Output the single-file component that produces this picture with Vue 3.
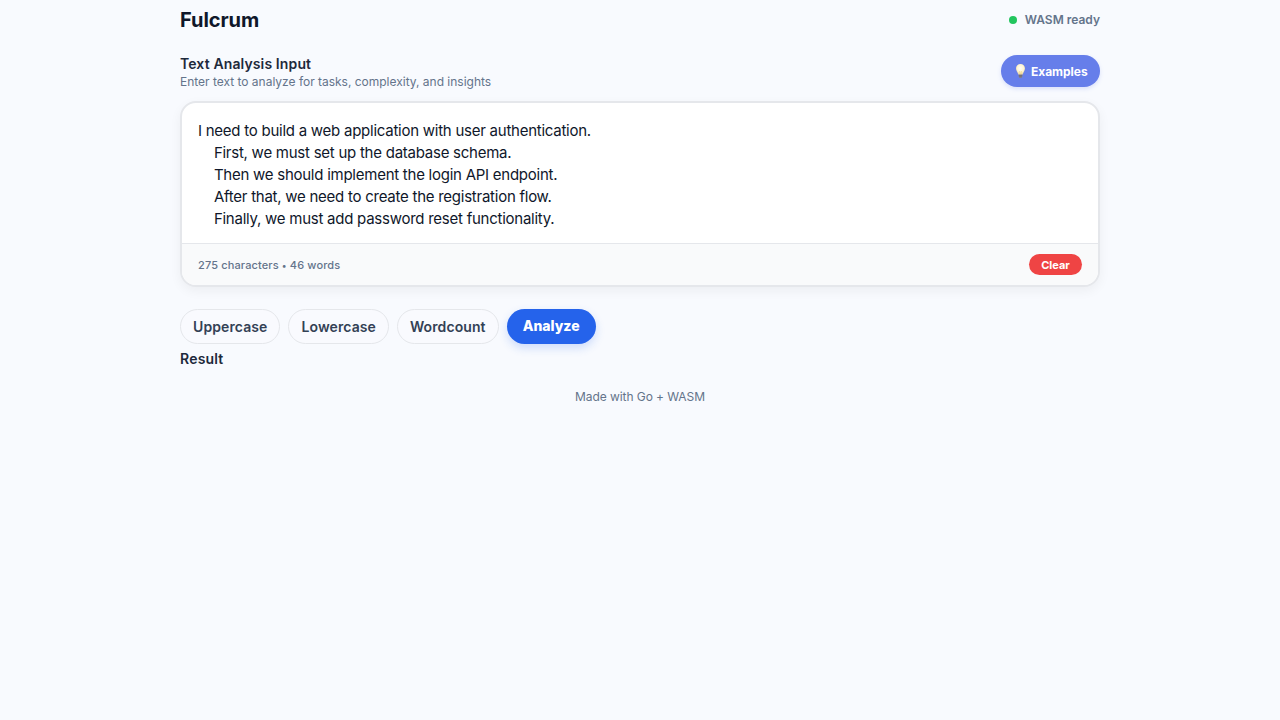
<script setup>
import { ref, computed } from 'vue'
const lines = ['I need to build a web application with user authentication.', '    First, we must set up the database schema.', '    Then we should implement the login API endpoint.', '    After that, we need to create the registration flow.', '    Finally, we must add password reset functionality.']
const text = ref(lines.join('\n'))
const summary = computed(() => '275 characters')
</script>

<template>
  <main class="page">
    <header class="top">
      <h1>Fulcrum</h1>
      <div class="status"><span class="dot"></span><span class="ready">WASM ready</span></div>
    </header>
    <section class="head">
      <div>
        <h2>Text Analysis Input</h2>
        <p>Enter text to analyze for tasks, complexity, and insights</p>
      </div>
      <button class="examples">
        <svg class="bulb" viewBox="0 0 14 14">
          <defs>
            <radialGradient id="glass" cx=".5" cy=".4" r=".65">
              <stop offset="0" stop-color="#fffef8" />
              <stop offset=".55" stop-color="#fdf4d3" />
              <stop offset="1" stop-color="#dfc994" />
            </radialGradient>
          </defs>
          <path d="M7.500 0C4.900 0 3 1.900 3 4.400c0 2.300 1.800 3.900 2.500 6.300h4C10.200 8.300 12 6.700 12 4.400 12 1.900 10.100 0 7.500 0z" fill="url(#glass)" />
          <path d="M6.600 7l.5 3.600h.8L8.400 7" fill="none" stroke="#f2d279" stroke-width=".7" />
          <path d="M5.700 10.600h3.600v2.200L8.400 14H6.600l-.9-1.200z" fill="#8b8890" />
          <path d="M5.800 11.600h3.400M6.100 12.800h2.800" stroke="#55545f" stroke-width=".5" />
        </svg>
        Examples
      </button>
    </section>
    <section class="editor">
      <div class="text">{{ text }}</div>
      <div class="foot"><span>{{ summary }} <span class="bullet">•</span> 46 words</span><button class="clear">Clear</button></div>
    </section>
    <div class="actions">
      <button>Uppercase</button><button>Lowercase</button><button>Wordcount</button><button class="primary">Analyze</button>
    </div>
    <h3>Result</h3>
    <footer>Made with Go + WASM</footer>
  </main>
</template>

<style>
body { margin: 0; background: #f8fafe; }
</style>
<style scoped>
* { box-sizing: border-box; }
.page { width: 920px; margin: 0 auto; font-family: Inter, sans-serif; color: #0f172a; }
h1, h2, h3, p { margin: 0; }
button { font-family: inherit; margin: 0; }
.top { display: flex; justify-content: space-between; align-items: center; height: 40px; }
h1 { font-size: 20px; font-weight: 700; line-height: 24px; letter-spacing: -.05px; }
.status { display: flex; align-items: center; gap: 8px; font-size: 12px; font-weight: 600; color: #64748b; }
.ready { padding-bottom: 2px; }
.dot { width: 8px; height: 8px; border-radius: 50%; background: #22c55e; }
.head { display: flex; justify-content: space-between; align-items: center; height: 32px; margin-top: 15px; }
.head > div { padding-top: 2px; }
h2 { font-size: 14px; font-weight: 600; line-height: 17px; letter-spacing: .12px; color: #1e293b; }
.head p { font-size: 12px; line-height: 15px; margin-top: 2px; color: #64748b; letter-spacing: -.01px; }
.examples { display: flex; align-items: center; gap: 4px; height: 32px; width: 99px; padding: 0 12px; border: 0; border-radius: 16px; background: #667eea; color: #fff; font-size: 12px; font-weight: 700; letter-spacing: -.03px; box-shadow: 0 2px 4px rgba(102,126,234,.2); }
.bulb { width: 14px; height: 14px; flex: none; }
.editor { margin-top: 14px; height: 186px; border: 2px solid #e5e7eb; border-radius: 16px; background: #fff; overflow: hidden; box-shadow: 0 4px 12px rgba(0,0,0,.05); }
.text { height: 140px; padding: 17px 16px; font-size: 15px; line-height: 22px; letter-spacing: -.25px; white-space: pre-wrap; }
.foot { display: flex; justify-content: space-between; align-items: center; height: 42px; padding: 0 16px; border-top: 1px solid #e5e7eb; background: #f9fafb; font-size: 11px; font-weight: 500; letter-spacing: .13px; color: #64748b; }
.bullet { font-size: 9px; }
.clear { height: 21px; width: 53px; padding: 0; border: 0; border-radius: 11px; background: #ef4444; color: #fff; font-size: 11px; font-weight: 700; }
.actions { display: flex; gap: 8px; margin-top: 22px; }
.actions button { height: 35px; padding: 0 12px; border: 1px solid #e5e7eb; border-radius: 18px; background: #f9fafe; color: #334155; font-size: 14px; font-weight: 600; letter-spacing: .095px; }
.actions .primary { border: 0; padding: 0 16px 2px; background: #2563eb; color: #fff; font-weight: 800; letter-spacing: 0; box-shadow: 0 4px 10px rgba(37,99,235,.2); }
h3 { margin-top: 6px; font-size: 14px; font-weight: 600; line-height: 18px; letter-spacing: .2px; color: #1e293b; }
footer { margin-top: 20px; text-align: center; font-size: 12px; line-height: 18px; letter-spacing: -.07px; color: #64748b; }
</style>
